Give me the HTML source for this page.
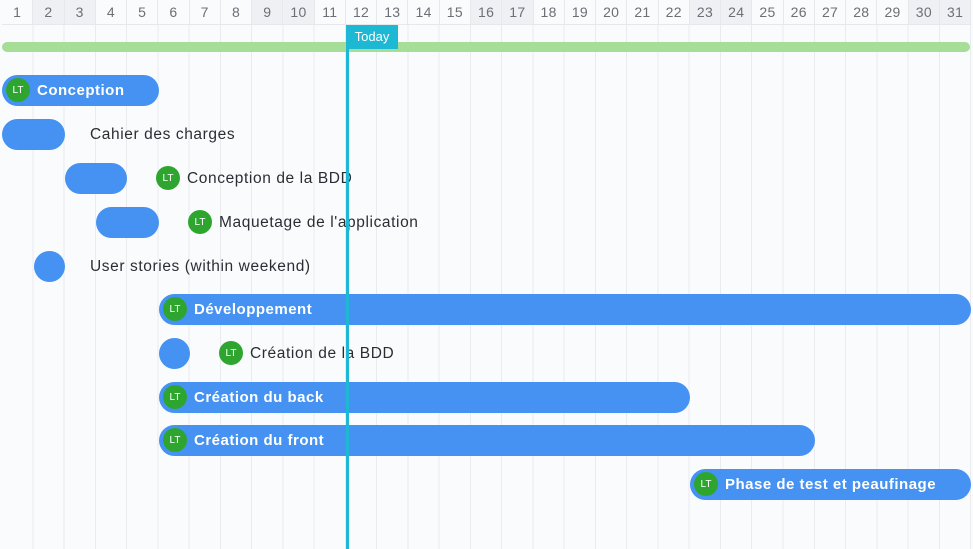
<!DOCTYPE html>
<html><head><meta charset="utf-8"><style>
*{margin:0;padding:0;box-sizing:border-box}
body{width:973px;height:549px;overflow:hidden;background:#fafbfc;font-family:"Liberation Sans",sans-serif;position:relative}
.grid{position:absolute;left:2px;top:0;width:969px;height:549px;background:repeating-linear-gradient(90deg,transparent 0,transparent 30.26px,#e9ebef 30.26px,#e9ebef 31.26px)}
.hdr{position:absolute;left:2px;top:0;width:969px;height:25px;display:flex;border-bottom:1px solid #e6e8ec}
.hdr div{flex:1;text-align:center;font-size:14px;line-height:25px;color:#6b6f76;border-right:1px solid #e6e8ec;background:#fafbfc;letter-spacing:0.3px}
.hdr div.w{background:#eff0f3}
.green{position:absolute;left:2px;top:42px;width:968px;height:10px;border-radius:5px;background:#a6dd97}
.today{position:absolute;left:346px;top:25px;width:3px;height:524px;background:#1cb8d4}
.tl{position:absolute;left:346px;top:25px;width:52px;height:24px;background:#1cb8d4;color:#fff;font-size:13px;line-height:24px;text-align:center}
.bar{position:absolute;height:31px;border-radius:16px;background:#4592f2}
.av{position:absolute;width:24px;height:24px;border-radius:50%;background:#2ea52f;color:#fff;font-size:10px;display:flex;align-items:center;justify-content:center}
.lb{position:absolute;font-size:15.5px;line-height:20px;color:#2a2e34;white-space:nowrap;letter-spacing:0.6px}
.lb.b{color:#fff;font-weight:bold;font-size:15px;letter-spacing:0.5px}
</style></head><body>
<div class="grid"></div>
<div class="hdr">
<div>1</div><div class="w">2</div><div class="w">3</div><div>4</div><div>5</div><div>6</div><div>7</div><div>8</div><div class="w">9</div><div class="w">10</div><div>11</div><div>12</div><div>13</div><div>14</div><div>15</div><div class="w">16</div><div class="w">17</div><div>18</div><div>19</div><div>20</div><div>21</div><div>22</div><div class="w">23</div><div class="w">24</div><div>25</div><div>26</div><div>27</div><div>28</div><div>29</div><div class="w">30</div><div class="w">31</div>
</div>
<div class="green"></div>

<div class="bar" style="left:2px;top:75px;width:157px"></div>
<div class="av" style="left:6px;top:78px">LT</div>
<div class="lb b" style="left:37px;top:81px">Conception</div>

<div class="bar" style="left:2px;top:119px;width:63px"></div>
<div class="lb" style="left:90px;top:125px">Cahier des charges</div>

<div class="bar" style="left:65px;top:163px;width:62px"></div>
<div class="av" style="left:156px;top:166px">LT</div>
<div class="lb" style="left:187px;top:169px">Conception de la BDD</div>

<div class="bar" style="left:96px;top:207px;width:63px"></div>
<div class="av" style="left:188px;top:210px">LT</div>
<div class="lb" style="left:219px;top:213px">Maquetage de l'application</div>

<div class="bar" style="left:34px;top:251px;width:31px"></div>
<div class="lb" style="left:90px;top:257px">User stories (within weekend)</div>

<div class="bar" style="left:159px;top:294px;width:812px"></div>
<div class="av" style="left:163px;top:297px">LT</div>
<div class="lb b" style="left:194px;top:300px">Développement</div>

<div class="bar" style="left:159px;top:338px;width:31px"></div>
<div class="av" style="left:219px;top:341px">LT</div>
<div class="lb" style="left:250px;top:344px">Création de la BDD</div>

<div class="bar" style="left:159px;top:382px;width:531px"></div>
<div class="av" style="left:163px;top:385px">LT</div>
<div class="lb b" style="left:194px;top:388px">Création du back</div>

<div class="bar" style="left:159px;top:425px;width:656px"></div>
<div class="av" style="left:163px;top:428px">LT</div>
<div class="lb b" style="left:194px;top:431px">Création du front</div>

<div class="bar" style="left:690px;top:469px;width:281px"></div>
<div class="av" style="left:694px;top:472px">LT</div>
<div class="lb b" style="left:725px;top:475px">Phase de test et peaufinage</div>

<div class="today"></div>
<div class="tl">Today</div>
</body></html>
